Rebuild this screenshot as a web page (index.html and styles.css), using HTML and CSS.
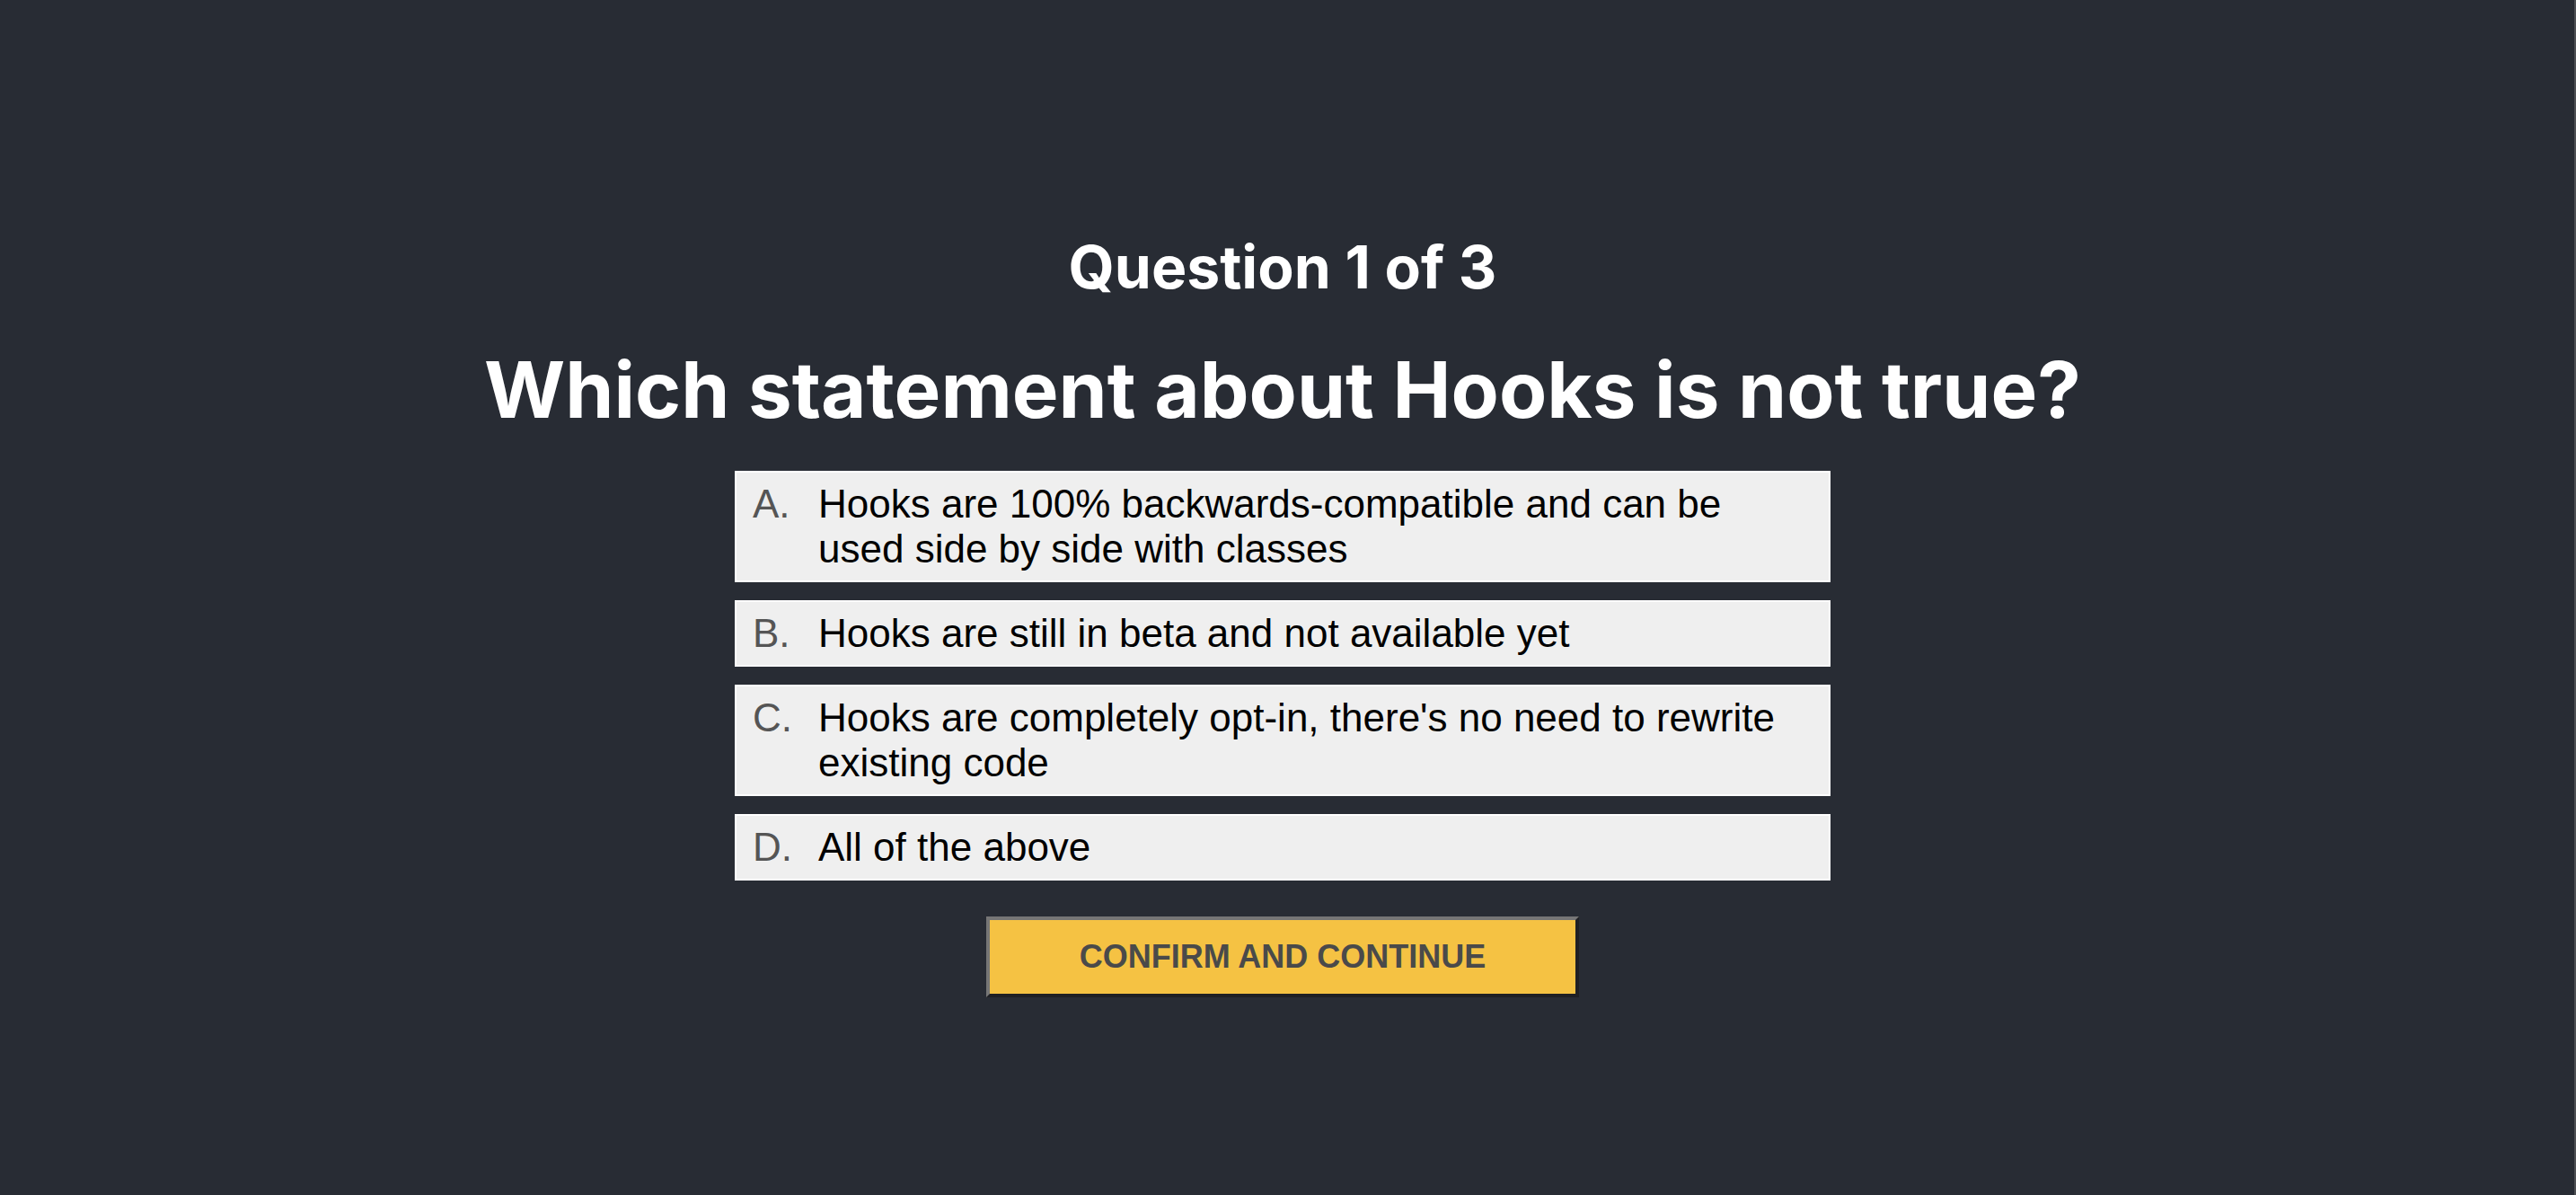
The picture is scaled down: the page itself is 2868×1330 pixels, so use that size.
FILE: index.html
```html
<!DOCTYPE html>
<html lang="en">
<head>
<meta charset="utf-8">
<title>Quiz</title>
<link rel="stylesheet" href="styles.css">
</head>
<body>
<div class="page">
  <main class="quiz">
    <h2 class="progress">Question 1 of 3</h2>
    <h1 class="question">Which statement about Hooks is not true?</h1>
    <ul class="options">
      <li class="option"><span class="letter">A.</span><span class="answer">Hooks are 100% backwards-compatible and can be used side by side with classes</span></li>
      <li class="option"><span class="letter">B.</span><span class="answer">Hooks are still in beta and not available yet</span></li>
      <li class="option"><span class="letter">C.</span><span class="answer">Hooks are completely opt-in, there's no need to rewrite existing code</span></li>
      <li class="option"><span class="letter">D.</span><span class="answer">All of the above</span></li>
    </ul>
    <button class="confirm" type="button">Confirm and continue</button>
  </main>
</div>
</body>
</html>
```

FILE: styles.css
```css
html, body {
  margin: 0;
  padding: 0;
  background: #282c34;
}

.page {
  display: flex;
  min-height: 1330px;
  border-right: 2px solid #4d4f53;
  box-sizing: border-box;
}

.quiz {
  flex: 1;
  display: flex;
  flex-direction: column;
  align-items: center;
  padding: 257px 10px 0 0;
}

.progress {
  margin: 0;
  font-family: Inter, "Liberation Sans", sans-serif;
  font-weight: 700;
  font-size: 66px;
  line-height: 80px;
  color: #ffffff;
}

.question {
  margin: 44px 0 0 0;
  font-family: Inter, "Liberation Sans", sans-serif;
  font-weight: 700;
  font-size: 87px;
  line-height: 105px;
  color: #ffffff;
}

.options {
  list-style: none;
  margin: 38px 0 0 0;
  padding: 0;
  width: 1220px;
  display: flex;
  flex-direction: column;
  gap: 20px;
}

.option {
  display: flex;
  align-items: flex-start;
  background: #efefef;
  border: 2px solid #ffffff;
  padding: 10px 40px 10px 18px;
  font-family: "Liberation Sans", Arial, sans-serif;
  font-size: 44px;
  line-height: 50px;
  color: #000000;
}

.letter {
  flex: 0 0 73px;
  color: #555555;
}

.answer {
  flex: 1;
}

.confirm {
  margin-top: 40px;
  width: 660px;
  height: 90px;
  box-sizing: border-box;
  border-style: solid;
  border-width: 4px;
  border-color: #767676 #1f2024 #1f2024 #767676;
  background: #f5c243;
  color: #4a4a4a;
  font-family: "Liberation Sans", Arial, sans-serif;
  font-weight: 700;
  font-size: 36px;
  text-transform: uppercase;
  padding: 0;
  cursor: pointer;
}
```
